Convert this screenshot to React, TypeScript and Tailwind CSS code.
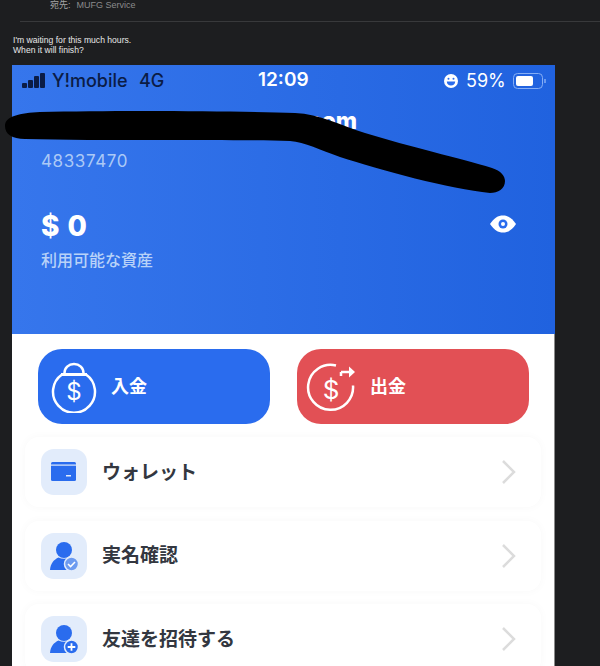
const menuItems = [
  { label: "ウォレット", icon: "wallet" },
  { label: "実名確認", icon: "verify" },
  { label: "友達を招待する", icon: "invite" },
];

function MenuIcon({ type }: { type: string }) {
  if (type === "wallet") {
    return (
      <svg width="46" height="46" viewBox="0 0 46 46">
        <rect x="10" y="13" width="25" height="19" rx="1.5" fill="#2a6cee" />
        <rect x="10" y="15.5" width="25" height="1.2" fill="#e2ecfb" />
        <rect x="25" y="26" width="5" height="1.5" fill="#e2ecfb" />
      </svg>
    );
  }
  return (
    <svg width="46" height="46" viewBox="0 0 46 46">
      <circle cx="23" cy="17" r="8" fill="#2a6cee" />
      <path d="M9 37c.5-6.500 4-10.500 8.500-12.500 3.500 1.800 7.500 1.800 11 0 3 1 5 2.500 6.500 5l-4 7.500z" fill="#2a6cee" />
      <circle cx="30.500" cy="31" r="7" fill={type === "verify" ? "#6d9bf0" : "#2a6cee"} stroke="#e2ecfb" strokeWidth="1.5" />
      {type === "verify" ? (
        <path d="M27 31l2.600 2.600 4.400-4.600" fill="none" stroke="#fff" strokeWidth="1.5" />
      ) : (
        <path d="M26.700 31h7.600M30.500 27.200v7.600" fill="none" stroke="#fff" strokeWidth="1.8" />
      )}
    </svg>
  );
}

function DepositIcon() {
  return (
    <svg width="48" height="52" viewBox="0 0 48 52" fill="none" stroke="#fff" strokeWidth="2.5">
      <path d="M12 13.500a21 21 0 1 0 24 0" />
      <path d="M14.500 12c0-5 4-9 9.500-9s9.500 4 9.500 9" />
      <path d="M11 13.500h26" strokeWidth="3" />
      <text x="24" y="39" textAnchor="middle" fontSize="24" fontWeight="400" fill="#fff" stroke="none">$</text>
    </svg>
  );
}

function WithdrawIcon() {
  return (
    <svg width="54" height="52" viewBox="0 0 54 52" fill="none" stroke="#fff" strokeWidth="2.5">
      <path d="M30 4.500a22.500 22.500 0 1 0 17 20" />
      <path d="M35 11h12" />
      <path d="M43 5.500l6 5.500-6 5.500z" fill="#fff" stroke="none" />
      <path d="M35 11v4" />
      <text x="25" y="38" textAnchor="middle" fontSize="26" fontWeight="400" fill="#fff" stroke="none">$</text>
    </svg>
  );
}

export default function App() {
  return (
    <div className="relative h-[666px] w-[600px] overflow-hidden bg-[#1d1e20] font-['Inter','Noto_Sans_CJK_JP',sans-serif]">
      <div className="h-[21px] pl-[50px] pt-[1px] font-['Liberation_Sans','Noto_Sans_CJK_JP',sans-serif] text-[9px] leading-[9px] text-[#8b8b8c]">
        <span className="text-[#a4a4a5]">宛先:</span>
        <span className="ml-[6px]">MUFG Service</span>
      </div>
      <div className="ml-[20px] h-px bg-[#38393b]" />
      <div className="h-[43px] pl-[13px] pt-[13px] font-['Liberation_Sans',sans-serif] text-[8.6px] leading-[10px] text-[#e8e8e8]">
        <p>I'm waiting for this much hours.</p>
        <p>When it will finish?</p>
      </div>

      <div className="ml-[12px] w-[543px]">
        <header className="h-[269px] bg-linear-to-r from-[#3676ec] to-[#2062df]">
          <div className="flex h-[30px] items-center pt-[1px]">
            <div className="ml-[10px] flex w-[24px] items-end gap-[1px]">
              <span className="h-[5px] w-[5px] rounded-[1px] bg-[#0b1c45]" />
              <span className="h-[8px] w-[5px] rounded-[1px] bg-[#0b1c45]" />
              <span className="h-[12px] w-[5px] rounded-[1px] bg-[#0b1c45]" />
              <span className="h-[15px] w-[5px] rounded-[1px] bg-[#0b1c45]" />
            </div>
            <span className="ml-[6px] w-[87px] text-[18px] font-medium text-[#0b1c45]">Y!mobile</span>
            <span className="w-[119px] text-[18px] font-medium text-[#0b1c45]">4G</span>
            <span className="w-[185px] text-[19px] font-semibold text-white">12:09</span>
            <svg width="16" height="16" viewBox="0 0 16 16" className="mr-[7px]">
              <circle cx="8" cy="8" r="7" fill="#fff" />
              <circle cx="5.500" cy="5.800" r="1" fill="#2a6cee" />
              <circle cx="10.500" cy="5.800" r="1" fill="#2a6cee" />
              <path d="M3.800 8.500h8.400c0 2.400-1.900 4-4.200 4s-4.200-1.600-4.200-4z" fill="#2a6cee" />
            </svg>
            <span className="w-[47px] text-[18px] text-white">59%</span>
            <svg width="34" height="18" viewBox="0 0 34 18">
              <rect x=".5" y="1.500" width="29" height="15" rx="4" fill="none" stroke="#86aef5" />
              <rect x="3" y="4" width="17" height="10" rx="2" fill="#fff" />
              <path d="M32 7v4" stroke="#86aef5" strokeWidth="1.500" />
            </svg>
          </div>

          <div className="ml-[30px] mt-[13px] h-[26px] w-[315px] text-right text-[23px] font-extrabold leading-[26px] text-white">
            .com
          </div>
          <div className="ml-[29px] mt-[17px] text-[17px] leading-[20px] tracking-[0.6px] text-[#abc9f6]">
            48337470
          </div>
          <div className="mt-[39px] flex items-center justify-between pl-[29px] pr-[38px]">
            <span className="text-[28px] font-extrabold leading-[32px] tracking-[1px] text-white">$ 0</span>
            <svg width="28" height="20" viewBox="0 0 28 20" className="-translate-y-[2px]">
              <path d="M1 10C5 4 9 1.500 14 1.500S23 4 27 10c-4 6-8 8.500-13 8.500S5 16 1 10z" fill="#fff" />
              <circle cx="14" cy="10" r="4.500" fill="#2a6cee" />
              <circle cx="14" cy="10" r="2" fill="#fff" />
            </svg>
          </div>
          <div className="ml-[29px] mt-[6px] text-[16px] font-medium leading-[24px] text-[#b8d2f8]">利用可能な資産</div>
        </header>

        <main className="h-[332px] border-r border-[#8a8a8a] bg-white">
          <div className="flex gap-[27px] pl-[26px] pr-[25px] pt-[15px]">
            <button className="flex h-[75px] w-[232px] items-center rounded-[24px] bg-[#2a6cee] pl-[12px] text-[18px] font-bold text-white">
              <DepositIcon />
              <span className="ml-[13px]">入金</span>
            </button>
            <button className="flex h-[75px] w-[232px] items-center rounded-[24px] bg-[#e25055] pl-[9px] text-[18px] font-bold text-white">
              <WithdrawIcon />
              <span className="ml-[10px]">出金</span>
            </button>
          </div>

          <div className="mt-[13px] flex flex-col gap-[13.5px] px-[13px]">
            {menuItems.map((item) => (
              <div
                key={item.label}
                className="flex h-[70px] shrink-0 items-center rounded-[14px] bg-white pl-[16px] pr-[24px] shadow-[0_0_10px_rgba(0,0,0,0.03)]"
              >
                <div className="flex h-[46px] w-[46px] items-center justify-center rounded-[13px] bg-[#e2ecfb]">
                  <MenuIcon type={item.icon} />
                </div>
                <span className="ml-[15px] flex-1 pt-[2px] text-[19px] font-bold text-[#333740]">{item.label}</span>
                <svg width="16" height="26" viewBox="0 0 16 26" fill="none" stroke="#dcdcdc" strokeWidth="2.500">
                  <path d="M2 2l11 11L2 24" />
                </svg>
              </div>
            ))}
          </div>
        </main>
      </div>

      {/* marker scribble over the name */}
      <svg width="600" height="666" viewBox="0 0 600 666" className="pointer-events-none absolute left-0 top-0">
        <path
          d="M5 126C5 116 20 113 40 112C120 110 240 111 295 113C320 114 340 125 365 133C410 147 460 158 492 168C501 171 505 176 505 181C505 189 498 193 490 193C450 189 380 170 340 157C320 150 305 142 290 141C220 139 100 141 25 139C12 139 5 134 5 126Z"
          fill="#000"
        />
      </svg>
    </div>
  );
}
